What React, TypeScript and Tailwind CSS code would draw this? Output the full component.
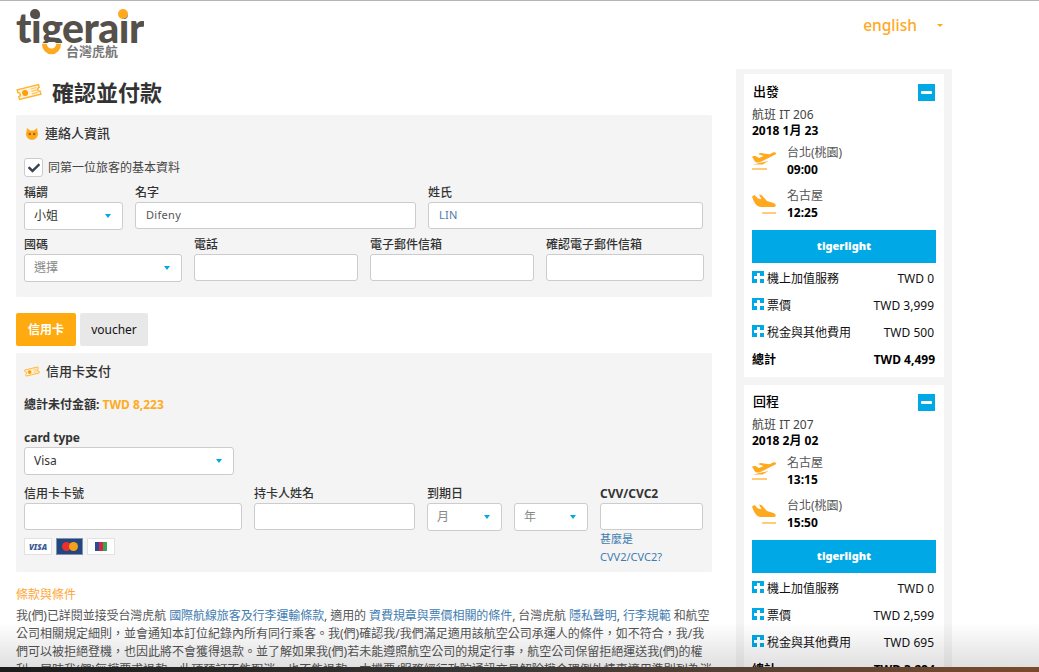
import { FaCheck } from "react-icons/fa";

const font = "font-['Noto_Sans','Noto_Sans_CJK_TC',sans-serif]";

function Ticket({ className }: { className: string }) {
  return (
    <svg viewBox="0 0 26 20" className={className}>
      <g transform="rotate(-14 13 10)">
        <path d="M2 5h22v3a2 2 0 0 0 0 4v3H2v-3a2 2 0 0 0 0-4z" fill="#fff3d9" stroke="#ffb233" strokeWidth="1.4" />
        <circle cx="9" cy="10" r="3" fill="#ff9d0a" />
        <path d="M15.500 7.500h6M15.500 10h6M15.500 12.500h6" stroke="#ffc766" strokeWidth="1.200" />
      </g>
    </svg>
  );
}

function TigerHead() {
  return (
    <svg viewBox="0 0 14 14" className="h-[14px] w-[14px] shrink-0">
      <path d="M2 1l3 2.500h4L12 1l1 6a6 6 0 0 1-12 0z" fill="#ffa91f" />
      <circle cx="4.800" cy="7" r="1.300" fill="#a8650a" />
      <circle cx="9.200" cy="7" r="1.300" fill="#a8650a" />
    </svg>
  );
}

function TakeoffIcon() {
  return (
    <svg viewBox="0 0 24 20" className="h-[20px] w-[24px] shrink-0">
      <path d="M0 5.500l3-.8 4 2.300 4.500-1.900L6 3l2.500-1 9 1.300L21 1.600c1.800-.8 3.600.2 2.800 1.600L8.500 11c-2 .8-4.500.8-5.800-.8z" fill="#ffa91f" />
      <path d="M1 13.500h9.500l6-3.500-8 1.800z" fill="#ffa91f" />
      <path d="M0 18h15" stroke="#ffa91f" strokeWidth="1.200" />
    </svg>
  );
}

function LandingIcon() {
  return (
    <svg viewBox="0 0 24 20" className="h-[20px] w-[24px] shrink-0">
      <path d="M0 2.500L2.500 1 6 4.500l3.500.8L7 .5 9.500 1l5.500 6 6.500 2c2.500.8 3.300 4 .5 4H9C5 13 2 9 0 2.500z" fill="#ffa91f" />
      <path d="M10 19h14" stroke="#ffa91f" strokeWidth="1.200" />
    </svg>
  );
}

function Caret() {
  return <span className="h-0 w-0 border-x-[3.500px] border-t-[4px] border-x-transparent border-t-[#00a9e5]" />;
}

function Label({ text, bold }: { text: string; bold?: boolean }) {
  return <div className={`h-[18px] text-xs leading-[17px] text-[#333] ${bold ? "font-bold" : "font-medium"}`}>{text}</div>;
}

function Input({ label, width, value, tone }: { label: string; width: string; value?: string; tone?: string }) {
  return (
    <div className={`shrink-0 ${width}`}>
      <Label text={label} />
      <div className={`flex h-[27px] items-center rounded-[3px] border border-[#ccc] bg-white px-[10px] text-[11px] tracking-[0.3px] ${tone ?? "text-[#555]"}`}>
        {value}
      </div>
    </div>
  );
}

function Select({ label, width, value, muted, bold }: { label: string; width: string; value: string; muted?: boolean; bold?: boolean }) {
  return (
    <div className={`shrink-0 ${width}`}>
      <Label text={label} bold={bold} />
      <div className={`flex h-[28px] items-center justify-between rounded-[3px] border border-[#ccc] bg-white pl-[9px] pr-[11px] text-xs ${muted ? "text-[#888]" : "text-[#333]"}`}>
        <span>{value}</span>
        <Caret />
      </div>
    </div>
  );
}

function Route({ icon, city, time }: { icon: React.ReactNode; city: string; time: string }) {
  return (
    <div className="flex h-[43px] items-center">
      {icon}
      <div className="ml-[11px] text-xs leading-[17px]">
        <div className="text-[#555]">{city}</div>
        <div className="font-bold text-black">{time}</div>
      </div>
    </div>
  );
}

function PriceRow({ label, amount }: { label: string; amount: string }) {
  return (
    <div className="flex h-[27px] items-center justify-between pr-[2px] text-xs text-[#111]">
      <div className="flex items-center">
        <span className="relative mb-[3px] mr-[3px] h-[12px] w-[12px] bg-[#00a9e5]">
          <span className="absolute left-[2px] top-[5px] h-[3px] w-[10px] bg-white" />
          <span className="absolute left-[5px] top-[2px] h-[10px] w-[3px] bg-white" />
        </span>
        {label}
      </div>
      <span>{amount}</span>
    </div>
  );
}

type Leg = {
  title: string;
  flight: string;
  date: string;
  from: string;
  dep: string;
  to: string;
  arr: string;
  fare: string;
  tax: string;
  total: string;
  top: string;
};

function LegCard({ leg }: { leg: Leg }) {
  return (
    <div className={`bg-white px-2 pb-[4px] ${leg.top}`}>
      <div className="flex h-[18px] items-center justify-between px-[1px] text-[13px] font-medium text-black">
        <span>{leg.title}</span>
        <span className="flex h-[17px] w-[17px] items-center justify-center bg-[#00a9e5]">
          <span className="h-[3px] w-[11px] rounded-[1px] bg-white" />
        </span>
      </div>
      <div className="mt-[5px] h-[17px] text-xs leading-[17px] text-[#444]">航班 {leg.flight}</div>
      <div className="h-[17px] text-xs font-bold leading-[15px] text-black">{leg.date}</div>
      <div className="-mt-[1px]">
        <Route icon={<TakeoffIcon />} city={leg.from} time={leg.dep} />
        <Route icon={<LandingIcon />} city={leg.to} time={leg.arr} />
      </div>
      <div className="mt-[5px] flex h-[33px] items-center justify-center bg-[#00a9e5] text-[11px] font-black text-white">tigerlight</div>
      <div className="mt-[2px]">
        <PriceRow label="機上加值服務" amount="TWD 0" />
        <PriceRow label="票價" amount={leg.fare} />
        <PriceRow label="稅金與其他費用" amount={leg.tax} />
        <div className="flex h-[27px] items-center justify-between pr-[1px] text-xs font-bold text-black">
          <span>總計</span>
          <span>{leg.total}</span>
        </div>
      </div>
    </div>
  );
}

const legs: Leg[] = [
  { title: "出發", flight: "IT 206", date: "2018 1月 23", from: "台北(桃園)", dep: "09:00", to: "名古屋", arr: "12:25", fare: "TWD 3,999", tax: "TWD 500", total: "TWD 4,499", top: "pt-[9px]" },
  { title: "回程", flight: "IT 207", date: "2018 2月 02", from: "名古屋", dep: "13:15", to: "台北(桃園)", arr: "15:50", fare: "TWD 2,599", tax: "TWD 695", total: "TWD 3,294", top: "pt-[8px]" },
];

function Link({ children }: { children: string }) {
  return <span className="text-[#3f7cb0]">{children}</span>;
}

export default function App() {
  return (
    <div className={`relative h-[672px] overflow-hidden border-t border-[#b5b5b5] bg-white ${font}`}>
      <header className="flex h-[68px] items-start justify-between pl-4 pr-[96px]">
        <div className="relative mt-[5px] h-[52px] w-[128px]">
          <div className="h-[37px] overflow-hidden font-['Lato'] text-[41px] font-black leading-[44px] tracking-[-0.5px] text-[#55504a]">tigerair</div>
          <span className="absolute left-[14px] top-[3px] h-[10px] w-[10px] rounded-full bg-[#55504a]" />
          <span className="absolute left-[102px] top-[3px] h-[10px] w-[10px] rounded-full bg-[#ffa91f]" />
          <svg viewBox="0 0 22 12" className="absolute left-[25px] top-[37px] h-[13px] w-[21px]">
            <path d="M1 0h5a5 5 0 0 0 10 0h5a10 11 0 0 1-20 0z" fill="#ffa91f" />
          </svg>
          <div className="absolute left-[50px] top-[38px] text-[13px] font-bold leading-[14px] text-[#777]">台灣虎航</div>
        </div>
        <div className="mt-[14px] flex items-center text-[15.5px] font-medium leading-5 text-[#ffa91f]">
          english
          <span className="ml-[20px] mt-[1px] h-0 w-0 border-x-[3px] border-t-[3px] border-x-transparent border-t-[#ffa91f]" />
        </div>
      </header>

      <div className="flex items-start gap-6 pl-4">
        <main className="w-[696px] shrink-0">
          <div className="flex h-[46px] items-center">
            <Ticket className="h-[20px] w-[26px] shrink-0" />
            <h1 className="ml-[10px] text-[22px] font-bold leading-[30px] text-[#333]">確認並付款</h1>
          </div>

          <section className="h-[182px] rounded-[2px] bg-[#f4f4f4] px-2">
            <div className="flex h-[37px] items-center pl-[1px] text-[13px] font-medium text-[#333]">
              <TigerHead />
              <span className="ml-[6px]">連絡人資訊</span>
            </div>
            <div className="mt-[6px] flex h-[19px] items-center">
              <span className="flex h-[19px] w-[19px] items-center justify-center rounded-[3px] border border-[#ccc] bg-white">
                <FaCheck className="h-[12px] w-[12px] text-[#3a4350]" />
              </span>
              <span className="ml-[5px] text-xs text-[#444]">同第一位旅客的基本資料</span>
            </div>
            <div className="mt-[7px] flex gap-3">
              <Select label="稱謂" width="w-[99px]" value="小姐" />
              <Input label="名字" width="w-[281px]" value="Difeny" />
              <Input label="姓氏" width="w-[275px]" value="LIN" tone="text-[#4b7da8]" />
            </div>
            <div className="mt-[6px] flex gap-3">
              <Select label="國碼" width="w-[158px]" value="選擇" muted />
              <Input label="電話" width="w-[164px]" />
              <Input label="電子郵件信箱" width="w-[164px]" />
              <Input label="確認電子郵件信箱" width="w-[158px]" />
            </div>
          </section>

          <div className="mt-4 flex gap-1">
            <div className="flex h-[33px] w-[60px] items-center justify-center rounded-[2px] bg-[#ffab0f] text-xs font-bold text-white">信用卡</div>
            <div className="flex h-[33px] w-[68px] items-center justify-center rounded-[2px] bg-[#e8e8e8] text-xs text-[#111]">voucher</div>
          </div>

          <section className="mt-[7px] h-[219px] rounded-[2px] bg-[#f4f4f4] px-2">
            <div className="flex h-[37px] items-center text-[13px] font-medium text-[#333]">
              <Ticket className="h-[13px] w-[16px] shrink-0" />
              <span className="ml-[6px]">信用卡支付</span>
            </div>
            <div className="mt-[6px] h-[17px] text-xs font-bold leading-[17px] text-[#333]">
              總計未付金額: <span className="text-[#ffab1f]">TWD 8,223</span>
            </div>
            <div className="mt-[16px]">
              <Select label="card type" bold width="w-[210px]" value="Visa" />
            </div>
            <div className="mt-[10px] flex gap-3">
              <Input label="信用卡卡號" width="w-[218px]" />
              <Input label="持卡人姓名" width="w-[161px]" />
              <Select label="到期日" width="w-[75px]" value="月" muted />
              <Select label="" width="w-[74px]" value="年" muted />
              <div className="w-[103px] shrink-0">
                <Label text="CVV/CVC2" bold />
                <div className="h-[27px] rounded-[3px] border border-[#ccc] bg-white" />
                <div className="text-[11px] leading-[18px] text-[#3f7cb0]">
                  甚麼是
                  <br />
                  CVV2/CVC2?
                </div>
              </div>
            </div>
            <div className="mt-[-28px] flex gap-1">
              <div className="flex h-[17px] w-[28px] items-center justify-center border border-[#e2e2e2] bg-white text-[8px] font-black italic text-[#3d5a94]">VISA</div>
              <div className="flex h-[17px] w-[27px] items-center justify-center border border-[#7f93ad] bg-[#23467f]">
                <span className="h-[9px] w-[9px] rounded-full bg-[#e8312a]" />
                <span className="-ml-[2px] h-[9px] w-[9px] rounded-full bg-[#f4a01c]" />
              </div>
              <div className="flex h-[17px] w-[28px] items-center justify-center border border-[#e2e2e2] bg-white">
                <span className="h-[9px] w-[4px] bg-[#2b4c9b]" />
                <span className="h-[9px] w-[4px] bg-[#d8263c]" />
                <span className="h-[9px] w-[4px] bg-[#3aa655]" />
              </div>
            </div>
          </section>

          <section className="mt-[14px] whitespace-nowrap text-xs leading-[18px] text-[#555]">
            <div className="text-[#ffa533]">條款與條件</div>
            <p className="mt-[3px]">
              <span className="tracking-[-0.08px]">
                我(們)已詳閱並接受台灣虎航 <Link>國際航線旅客及行李運輸條款</Link>, 適用的 <Link>資費規章與票價相關的條件</Link>, 台灣虎航 <Link>隱私聲明</Link>, <Link>行李規範</Link> 和航空
              </span>
              <br />
              公司相關規定細則，並會通知本訂位紀錄內所有同行乘客。我(們)確認我/我們滿足適用該航空公司承運人的條件，如不符合，我/我
              <br />
              們可以被拒絕登機，也因此將不會獲得退款。並了解如果我(們)若未能遵照航空公司的規定行事，航空公司保留拒絕運送我(們)的權
              <br />
              利，屆時我(們)無權要求退款。此項預訂不能取消，也不能退款。本機票/服務經行政院通訊交易解除權合理例外情事適用準則列為消
            </p>
          </section>
        </main>

        <aside className="flex w-[216px] shrink-0 flex-col gap-2 bg-[#f4f4f4] px-2 pt-[5px]">
          {legs.map((leg) => (
            <LegCard key={leg.title} leg={leg} />
          ))}
        </aside>
      </div>

      <div className="absolute inset-x-0 bottom-[5px] h-[45px] bg-gradient-to-b from-transparent to-[#0000001f]" />
      <div className="absolute inset-x-0 bottom-0 h-[5px] bg-gradient-to-r from-[#1c1c1c] via-[#3a3836] to-[#7a4a2c]" />
    </div>
  );
}
